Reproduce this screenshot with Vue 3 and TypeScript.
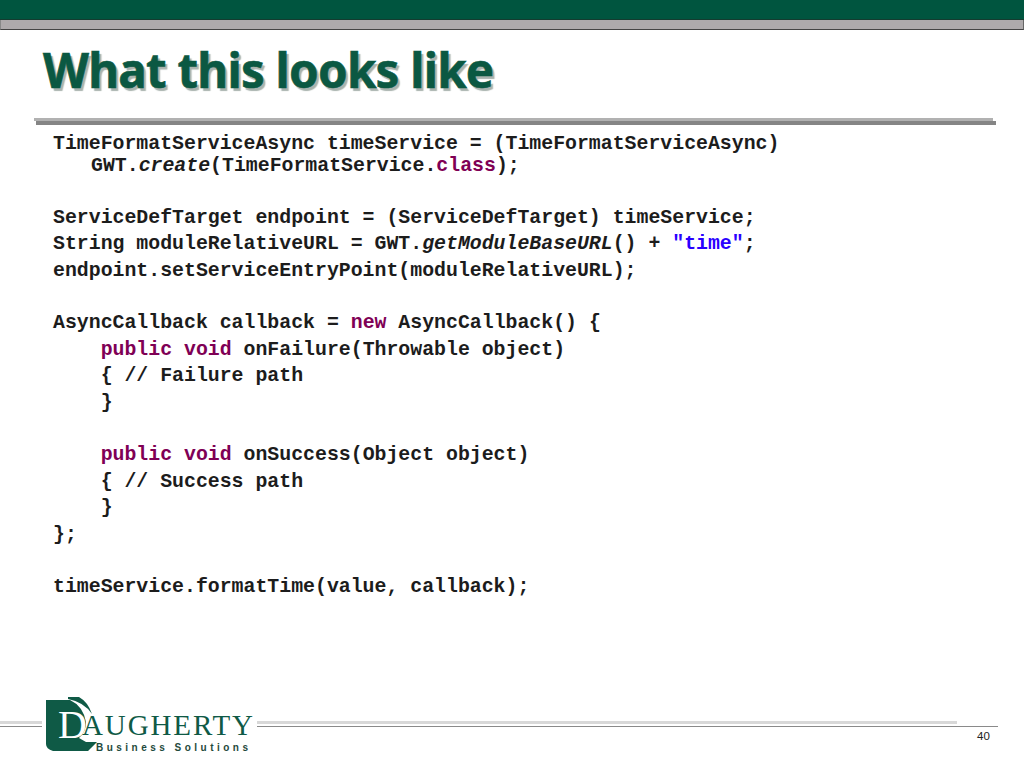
<script setup lang="ts">
interface Seg { t: string; c?: string }
const lines: { segs: Seg[]; cls?: string }[] = [
  { cls: 'tight', segs: [{ t: 'TimeFormatServiceAsync timeService = (TimeFormatServiceAsync)' }] },
  { cls: 'hang', segs: [{ t: 'GWT.' }, { t: 'create', c: 'it' }, { t: '(TimeFormatService.' }, { t: 'class', c: 'kw' }, { t: ');' }] },
  { segs: [] },
  { segs: [{ t: 'ServiceDefTarget endpoint = (ServiceDefTarget) timeService;' }] },
  { segs: [{ t: 'String moduleRelativeURL = GWT.' }, { t: 'getModuleBaseURL', c: 'it' }, { t: '() + ' }, { t: '"time"', c: 'str' }, { t: ';' }] },
  { segs: [{ t: 'endpoint.setServiceEntryPoint(moduleRelativeURL);' }] },
  { segs: [] },
  { segs: [{ t: 'AsyncCallback callback = ' }, { t: 'new', c: 'kw' }, { t: ' AsyncCallback() {' }] },
  { segs: [{ t: '    ' }, { t: 'public void', c: 'kw' }, { t: ' onFailure(Throwable object)' }] },
  { segs: [{ t: '    { // Failure path' }] },
  { segs: [{ t: '    }' }] },
  { segs: [] },
  { segs: [{ t: '    ' }, { t: 'public void', c: 'kw' }, { t: ' onSuccess(Object object)' }] },
  { segs: [{ t: '    { // Success path' }] },
  { segs: [{ t: '    }' }] },
  { segs: [{ t: '};' }] },
  { segs: [] },
  { segs: [{ t: 'timeService.formatTime(value, callback);' }] },
]
</script>

<template>
  <div class="slide">
    <div class="band"></div>
    <div class="strip"></div>
    <h1 class="title">What this looks like</h1>
    <div class="rule">
      <div class="rule-top"></div>
      <div class="rule-bottom"></div>
    </div>
    <div class="code">
      <div v-for="(l, i) in lines" :key="i" class="line" :class="l.cls">
        <span v-for="(s, j) in l.segs" :key="j" :class="s.c">{{ s.t }}</span>
      </div>
    </div>
    <div class="footer">
      <div class="lines">
        <div class="light"></div>
        <div class="dark"></div>
      </div>
      <svg class="logo" width="230" height="70" viewBox="0 0 230 70">
        <rect x="6" y="0" width="215" height="70" fill="#fff" />
        <path d="M10 8 L34 8 Q47 14 50 30 Q50 40 43 46 L50 50 L61 50 L52 59 L17 59 Q10 57 10 52 Z" fill="#0f5a46" />
        <path d="M32 5 L43 5 Q52 10 56 22 Q48 10 32 7 Z" fill="#0f5a46" />
        <text x="22" y="46" class="d">D</text>
        <text x="46" y="43" class="name" textLength="171" lengthAdjust="spacing">AUGHERTY</text>
        <text x="60" y="59" class="sub" textLength="152" lengthAdjust="spacing">Business Solutions</text>
      </svg>
      <div class="num">40</div>
    </div>
  </div>
</template>

<style scoped>
.slide {
  width: 1024px;
  height: 768px;
  display: flex;
  flex-direction: column;
  position: relative;
  overflow: hidden;
  background: #fff;
}
.band { height: 19px; background: #00553f; border-bottom: 1px solid #143c30; }
.strip {
  height: 8.5px;
  background: #aeaaac;
  border-bottom: 1.5px solid #444;
  border-left: 1px solid #888;
  border-right: 1px solid #666;
}
.title {
  margin: 13px 0 0 43px;
  height: 53px;
  font: bold 47.5px/53px "Noto Sans", sans-serif;
  letter-spacing: -0.75px;
  color: #0b5842;
  -webkit-text-stroke: 0.6px #0b5842;
  text-shadow: 2.5px 2.5px 1px #a9b3ae;
}
.rule {
  margin: 22px 0 0 34px;
  width: 962px;
}
.rule-top { width: 959px; height: 3px; background: #b1b1b1; }
.rule-bottom { height: 4px; margin-left: 2px; background: #858585; }
.code {
  margin: 6px 0 0 53px;
  font: bold 19.85px/26.4px "Liberation Mono", monospace;
  color: #1c1c1c;
  white-space: pre;
}
.line { height: 26.4px; }
.tight { height: 22px; line-height: 22px; margin-top: 2px; }
.hang { height: 22px; line-height: 22px; padding-left: 38px; margin-bottom: 2px; }
.it { font-style: italic; }
.kw { color: #7f0055; }
.str { color: #2a00ff; }
.footer {
  position: absolute;
  left: 0;
  right: 0;
  bottom: 0;
  height: 76px;
}
.lines { padding-top: 29px; }
.light { width: 957px; height: 3px; background: #d8d8d8; }
.dark { width: 998px; height: 1px; margin-top: 2px; background: #8a8a8a; }
.logo { position: absolute; left: 36px; top: 0; }
.d { font: 40px "Liberation Serif", serif; fill: #fff; }
.name { font: 29px "Liberation Serif", serif; fill: #0f5a46; }
.sub { font: bold 10px "Liberation Sans", sans-serif; fill: #1f4a3c; }
.num {
  position: absolute;
  left: 977px;
  top: 37px;
  font: 11.5px/14px "Liberation Sans", sans-serif;
  color: #222;
}
</style>
